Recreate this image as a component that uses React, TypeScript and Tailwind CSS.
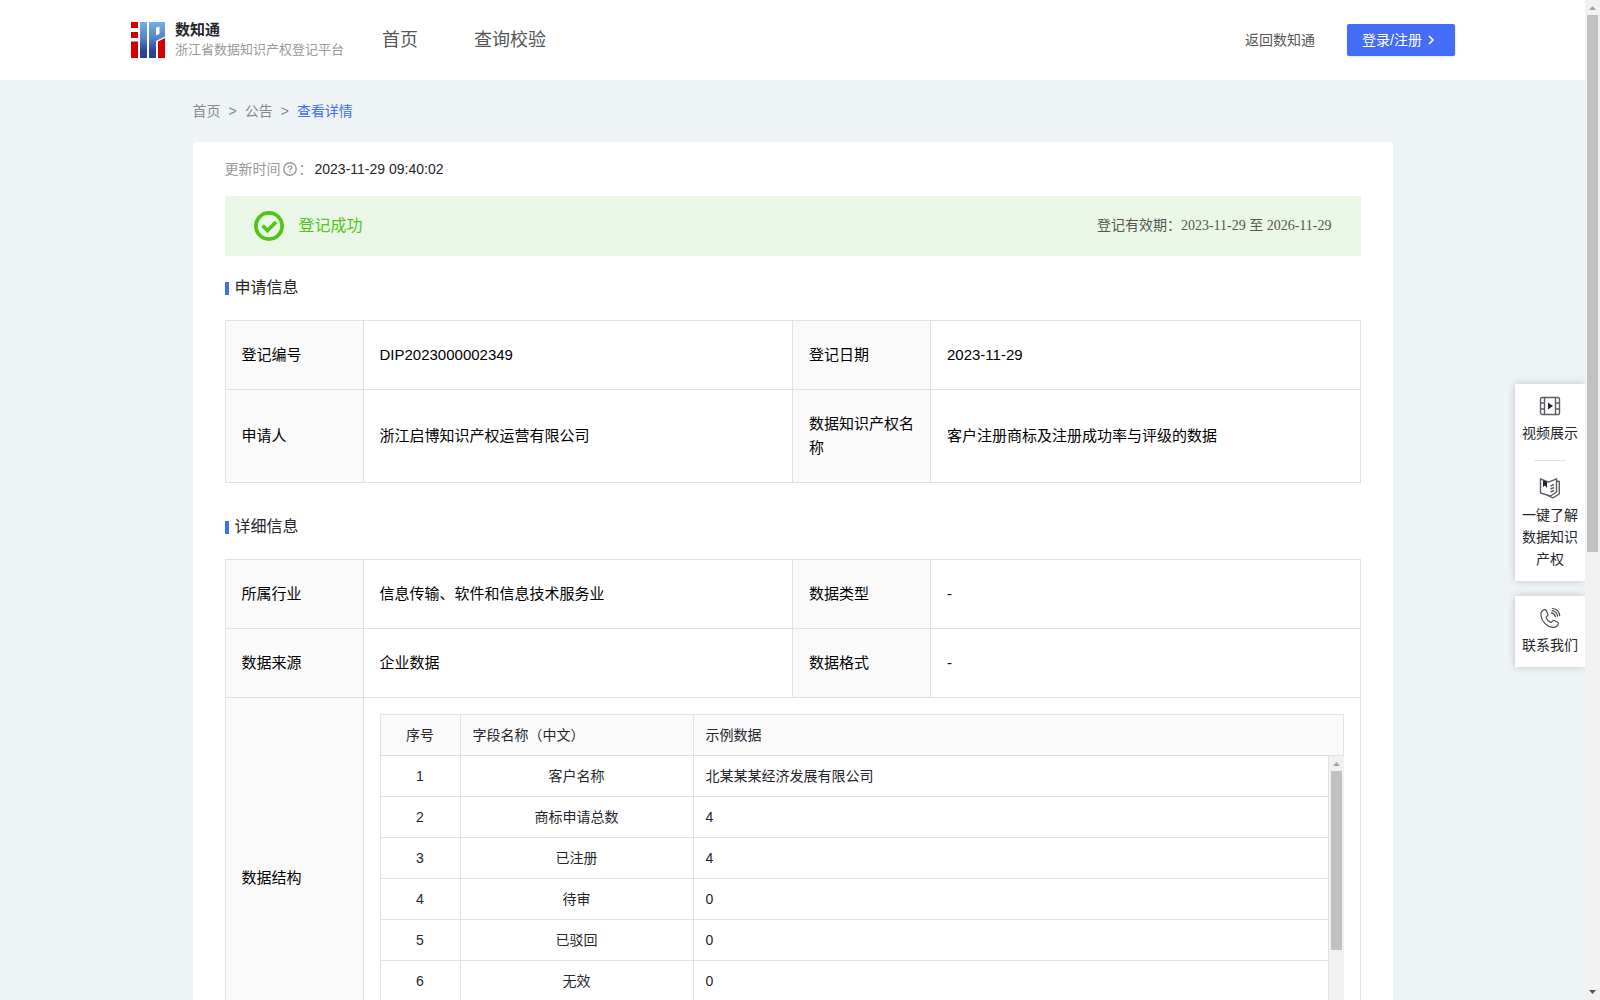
import React from 'react';

const applyRows = [
  ['登记编号', 'DIP2023000002349', '登记日期', '2023-11-29'],
  ['申请人', '浙江启博知识产权运营有限公司', '数据知识产权名称', '客户注册商标及注册成功率与评级的数据'],
];

const detailRows = [
  ['所属行业', '信息传输、软件和信息技术服务业', '数据类型', '-'],
  ['数据来源', '企业数据', '数据格式', '-'],
];

const fields = [
  { name: '客户名称', sample: '北某某某经济发展有限公司' },
  { name: '商标申请总数', sample: '4' },
  { name: '已注册', sample: '4' },
  { name: '待审', sample: '0' },
  { name: '已驳回', sample: '0' },
  { name: '无效', sample: '0' },
];

function Logo() {
  return (
    <svg width="34" height="36" viewBox="0 0 34 36" aria-hidden="true">
      <defs>
        <linearGradient id="logoBlue" x1="0" y1="0" x2="0" y2="36" gradientUnits="userSpaceOnUse">
          <stop offset="0" stopColor="#76aee6" />
          <stop offset="0.45" stopColor="#5584c8" />
          <stop offset="0.8" stopColor="#2b4594" />
          <stop offset="1" stopColor="#2c3f8c" />
        </linearGradient>
      </defs>
      <path fill="#d40000" d="M0 0H7V6H0ZM0 10H7V16H0ZM0 19.500H7V36H0Z" />
      <path fill="url(#logoBlue)" d="M9 0H16V36H9Z" />
      <path fill="url(#logoBlue)" fillRule="evenodd" d="M18 0H34V14.500L25 19V36H18ZM25 5.500V13.500L28.500 11.800V4.500Z" />
      <path fill="#d40000" d="M27 19.500L34 16V36H27Z" />
    </svg>
  );
}

function ArrowUp() {
  return (
    <svg className="block" width="15" height="15" viewBox="0 0 15 15" aria-hidden="true">
      <path fill="#a3a3a3" d="M7.500 6L11 10H4Z" />
    </svg>
  );
}

function HelpIcon() {
  return (
    <svg className="mx-0.5" width="14" height="14" viewBox="0 0 14 14" fill="none" stroke="#999" aria-hidden="true">
      <circle cx="7" cy="7" r="6.200" strokeWidth="1.400" />
      <path d="M5.200 5.600C5.200 3.300 8.800 3.400 8.800 5.500C8.800 6.800 7 6.800 7 8.400" strokeWidth="1.400" />
      <path d="M7 9.400V10.700" strokeWidth="1.500" />
    </svg>
  );
}

function SuccessIcon() {
  return (
    <svg width="30" height="30" viewBox="0 0 30 30" fill="none" stroke="#52c41a" aria-hidden="true">
      <circle cx="15" cy="15" r="13.100" strokeWidth="3.800" />
      <path d="M8.500 14.500L13.500 19.500L22 11" strokeWidth="3.800" />
    </svg>
  );
}

function VideoIcon() {
  return (
    <svg width="22" height="22" viewBox="0 0 22 22" fill="none" stroke="#5c5e64" strokeWidth="1.400" aria-hidden="true">
      <rect x="1.500" y="2.500" width="19" height="17" rx="2" />
      <path d="M5.500 2.500V19.500M16.500 2.500V19.500M1.500 8H5.500M1.500 14H5.500M16.500 8H20.500M16.500 14H20.500" />
      <path d="M9 7.500L14 11L9 14.500Z" fill="#25262d" stroke="none" />
    </svg>
  );
}

function BookIcon() {
  return (
    <svg width="22" height="22" viewBox="0 0 22 22" fill="none" stroke="#5c5e64" strokeWidth="1.400" strokeLinejoin="round" aria-hidden="true">
      <path d="M1.500 1.800L9.500 5.200L17.500 1.800V15L11.500 19L1.500 16Z" />
      <path d="M17.500 4L20.300 4.500V17L14 20.800L9.500 18.800" />
      <path d="M11.500 9L15 7.500M11.500 12L15 10.500M11.500 15L15 13.500" />
      <path d="M4 3V10L6 8.500L8 11V4.700Z" fill="#25262d" stroke="none" />
    </svg>
  );
}

function PhoneIcon() {
  return (
    <svg width="22" height="22" viewBox="0 0 22 22" fill="none" stroke="#4a4c52" strokeWidth="1.200" strokeLinecap="round" strokeLinejoin="round" aria-hidden="true">
      <path d="M5.500 2.600C3.200 3.300 1.600 5.300 2 8.500C2.800 14.500 7.500 19.600 13.500 20.300C16.500 20.600 18.600 18.900 19.300 16.700C19.500 16 19.200 15.500 18.600 15.200L15.300 13.500C14.700 13.200 14.200 13.300 13.800 13.800L12.700 15C12.300 15.400 11.800 15.500 11.300 15.200C9.400 14.200 8 12.700 7.200 10.900C7 10.400 7.100 10 7.500 9.600L8.600 8.500C9 8.100 9.100 7.600 8.800 7.100L7 3.200C6.700 2.600 6.200 2.400 5.500 2.600Z" />
      <path d="M12.500 5.800C14.600 6.200 16 7.600 16.400 9.700M13 3.600C16 4 18.200 6.200 18.600 9.200M13.500 1.500C17.500 1.900 20.300 4.700 20.700 8.700" />
    </svg>
  );
}

function SectionTitle({ children }: { children: React.ReactNode }) {
  return (
    <h2 className="flex h-16 items-center gap-1.5 text-[16px] leading-6 text-[#25262d]">
      <span className="mt-px h-[13px] w-1 bg-[#446df6]" />
      {children}
    </h2>
  );
}

function InfoRow({ cells }: { cells: string[] }) {
  return (
    <tr>
      {cells.map((cell, i) =>
        i % 2 === 0 ? (
          <th key={i} scope="row" className="border border-[#e1e1e1] bg-[#fafafa] px-4 py-[22px] text-left font-normal">
            {cell}
          </th>
        ) : (
          <td key={i} className="border border-[#e1e1e1] px-4 py-[22px]">
            {cell}
          </td>
        )
      )}
    </tr>
  );
}

function InfoTable({ children }: { children: React.ReactNode }) {
  return (
    <table className="w-full table-fixed border-collapse text-[15px] leading-6 text-black">
      <colgroup>
        <col className="w-[138px]" />
        <col />
        <col className="w-[138px]" />
        <col />
      </colgroup>
      <tbody>{children}</tbody>
    </table>
  );
}

function FieldCols() {
  return (
    <colgroup>
      <col className="w-[81px]" />
      <col className="w-[233px]" />
      <col />
    </colgroup>
  );
}

function FieldTable() {
  return (
    <div className="text-[14px] leading-5 text-[#25262d]">
      <table className="w-full table-fixed border-separate border-spacing-0">
        <FieldCols />
        <thead>
          <tr className="h-[42px] bg-[#fafafa]">
            <th className="border border-[#e1e1e1] text-center font-normal">序号</th>
            <th className="border-y border-r border-[#e1e1e1] px-3 text-left font-normal">字段名称（中文）</th>
            <th className="border-y border-r border-[#e1e1e1] px-3 text-left font-normal">示例数据</th>
          </tr>
        </thead>
      </table>
      <div className="flex h-[286px] overflow-hidden">
        <div className="min-w-0 flex-1">
          <table className="w-full table-fixed border-separate border-spacing-0">
            <FieldCols />
            <tbody>
              {fields.map((field, i) => (
                <tr key={field.name} className="h-[41px]">
                  <td className="border-x border-b border-[#e1e1e1] text-center">{i + 1}</td>
                  <td className="border-r border-b border-[#e1e1e1] px-3 text-center">{field.name}</td>
                  <td className="border-r border-b border-[#e1e1e1] px-3">{field.sample}</td>
                </tr>
              ))}
            </tbody>
          </table>
        </div>
        <div className="w-[15px] bg-[#f1f1f1]">
          <ArrowUp />
          <div className="mx-0.5 h-[179px] bg-[#c1c1c1]" />
        </div>
      </div>
    </div>
  );
}

function SideItem({ icon, label }: { icon: React.ReactNode; label: string }) {
  return (
    <button type="button" className="flex w-full flex-col items-center gap-[5px] px-[7px] text-[14px] leading-[22px] text-[#25262d]">
      {icon}
      {label}
    </button>
  );
}

function App() {
  return (
    <div className="relative flex h-screen bg-[#eef3f6] font-['Liberation_Sans','Noto_Sans_CJK_SC',sans-serif]">
      <div className="min-w-0 flex-1 overflow-y-auto [scrollbar-width:none]">
        {/* Header */}
        <header className="flex h-20 items-center bg-white pr-[130px] pl-[131px]">
          <a href="#" className="flex items-center gap-2.5">
            <Logo />
            <span className="flex flex-col">
              <span className="text-[15px] leading-5 font-bold text-[#25262d]">数知通</span>
              <span className="text-[13px] leading-5 text-[#999]">浙江省数据知识产权登记平台</span>
            </span>
          </a>
          <nav className="ml-[38px] flex gap-14 text-[18px] leading-6 text-[#555]">
            <a href="#">首页</a>
            <a href="#">查询校验</a>
          </nav>
          <div className="ml-auto flex items-center gap-8 text-[14px]">
            <a href="#" className="text-[#555]">返回数知通</a>
            <button type="button" className="flex h-8 w-[108px] items-center gap-1 rounded-xs bg-[#446df6] pl-[15px] text-white shadow-sm">
              登录/注册
              <svg width="10" height="12" viewBox="0 0 10 12" fill="none" stroke="currentColor" strokeWidth="1.500" aria-hidden="true">
                <path d="M3 2L7 6L3 10" />
              </svg>
            </button>
          </div>
        </header>

        <main className="mx-auto max-w-[1200px]">
          {/* Breadcrumb */}
          <nav className="flex h-[62px] items-center gap-2 text-[14px] leading-5 text-[#888]">
            <a href="#">首页</a>
            <span>&gt;</span>
            <a href="#">公告</a>
            <span>&gt;</span>
            <a href="#" className="text-[#446df6]">查看详情</a>
          </nav>

          <div className="rounded-sm bg-white px-8 pb-8">
            <div className="flex h-[54px] items-center text-[14px] leading-5 text-[#999]">
              更新时间
              <HelpIcon />
              ：
              <span className="ml-0.5 text-[#25262d]">2023-11-29 09:40:02</span>
            </div>

            {/* Registration status */}
            <div className="flex h-[60px] items-center justify-between bg-[#ebf7e6] px-[29px]">
              <div className="flex items-center gap-[15px] text-[16px] leading-6 text-[#52c41a]">
                <SuccessIcon />
                登记成功
              </div>
              <div className="font-['Liberation_Serif','Noto_Sans_CJK_SC',serif] text-[14px] leading-5 text-[#555]">
                登记有效期：2023-11-29 至 2026-11-29
              </div>
            </div>

            <SectionTitle>申请信息</SectionTitle>
            <InfoTable>
              {applyRows.map((row) => (
                <InfoRow key={row[0]} cells={row} />
              ))}
            </InfoTable>

            <div className="mt-3">
              <SectionTitle>详细信息</SectionTitle>
            </div>
            <InfoTable>
              {detailRows.map((row) => (
                <InfoRow key={row[0]} cells={row} />
              ))}
              <tr>
                <th scope="row" className="border border-[#e1e1e1] bg-[#fafafa] px-4 text-left font-normal">数据结构</th>
                <td colSpan={3} className="border border-[#e1e1e1] p-4">
                  <FieldTable />
                </td>
              </tr>
            </InfoTable>
          </div>
        </main>
      </div>

      {/* Page scrollbar */}
      <div className="flex w-[15px] flex-col bg-[#f1f1f1]">
        <ArrowUp />
        <div className="mx-0.5 flex-1">
          <div className="h-[537px] bg-[#c1c1c1]" />
        </div>
        <svg className="block" width="15" height="15" viewBox="0 0 15 15" aria-hidden="true">
          <path fill="#505050" d="M4 5H11L7.500 9Z" />
        </svg>
      </div>

      {/* Floating shortcuts */}
      <aside className="absolute top-96 right-[15px] flex w-[70px] flex-col gap-[15px]">
        <div className="bg-white py-[11px] shadow-[0_0_8px_rgba(0,0,0,0.2)] [clip-path:inset(-12px_0_-12px_-12px)]">
          <SideItem icon={<VideoIcon />} label="视频展示" />
          <div className="mx-auto my-4 h-px w-8 bg-[#e1e1e1]" />
          <SideItem icon={<BookIcon />} label="一键了解数据知识产权" />
        </div>
        <div className="bg-white py-[11px] shadow-[0_0_8px_rgba(0,0,0,0.2)] [clip-path:inset(-12px_0_-12px_-12px)]">
          <SideItem icon={<PhoneIcon />} label="联系我们" />
        </div>
      </aside>
    </div>
  );
}

export default App;
